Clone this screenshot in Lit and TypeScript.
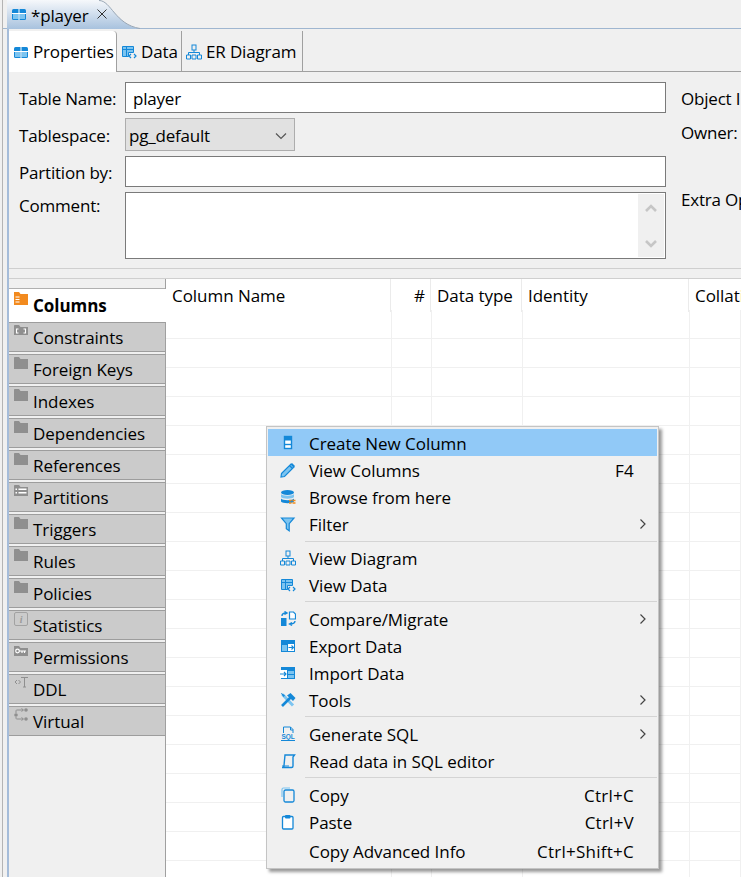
/**
 * Table editor with a context menu over the columns grid
 */

import { LitElement, css, html, svg } from "lit";
import { customElement } from "lit/decorators.js";

const BLUE = "#1488d8";
const LIGHT = "#7cc4f0";
const GREY = "#8f8f8f";

const icons: Record<string, ReturnType<typeof svg>> = {
  table: svg`<rect x="1" y="3" width="14" height="11" rx="1.5" fill="${BLUE}"/><rect x="2" y="8" width="5.5" height="5" fill="${LIGHT}"/><rect x="8.5" y="8" width="5.5" height="5" fill="${LIGHT}"/><path d="M1 7.5h14M8 3v11" stroke="#fff" stroke-width="1"/>`,
  data: svg`<path d="M1.5 2.5h11v6h-5v4h-6z" fill="${LIGHT}" stroke="${BLUE}"/><path d="M1.5 5.5h11M5.5 3v9" stroke="${BLUE}"/><path d="M10 10l-2 2 2 2M13 10l2 2-2 2" fill="none" stroke="${BLUE}" stroke-width="1.2"/>`,
  diagram: svg`<rect x="6" y="1" width="4" height="5" fill="none" stroke="${BLUE}"/><path d="M8 6v3M2.5 11V8.5h11V11" fill="none" stroke="${BLUE}"/><path d="M.5 11h4v4h-4zM6 11h4v4H6zM11.5 11h4v4h-4z" fill="none" stroke="${BLUE}"/>`,
  column: svg`<rect x="4.5" y="1.5" width="7" height="12" fill="#fff" stroke="${BLUE}" stroke-width="1.4"/><rect x="5" y="2" width="6" height="3.5" fill="${BLUE}"/><path d="M4.5 9.5h7" stroke="${BLUE}" stroke-width="1.4"/>`,
  pencil: svg`<path d="M1.5 11.5L11 2l3 3-9.5 9.5-3.5.5z" fill="${LIGHT}" stroke="${BLUE}" stroke-width="1.2"/><path d="M9.5 3.5l3 3" stroke="${BLUE}" stroke-width="1.4"/><path d="M11 2l3 3 1-1-3-3z" fill="${BLUE}"/>`,
  browse: svg`<ellipse cx="7.5" cy="3.5" rx="6.5" ry="2.5" fill="${BLUE}"/><path d="M1 5c1 2.2 12 2.2 13 0v3c-1 2.2-12 2.2-13 0z" fill="${LIGHT}"/><path d="M1 9.5c1 2.2 12 2.2 13 0v3c-1 2.2-12 2.2-13 0z" fill="${BLUE}"/><path d="M9 11.5h2.5M12.5 11.5h3M9 14h2.5M12.5 14h3" stroke="#f08a1c" stroke-width="1.4"/>`,
  filter: svg`<path d="M1.5 2h12.5l-4.8 5.6v7.2l-2.9-2V7.6z" fill="${LIGHT}" stroke="${BLUE}" stroke-width="1.2"/>`,
  compare: svg`<path d="M9.5 1h4l2 2v5h-6z" fill="#fff" stroke="${BLUE}" stroke-width="1.2"/><path d="M1 7h5.500v8H1z" fill="${BLUE}"/><path d="M2 5c0-2 1.500-3 4-3M4.500 .5L7 2 4.500 3.500" fill="none" stroke="${BLUE}" stroke-width="1.400"/><path d="M15 10c0 2-1.500 3-5.500 3M12 11.500L9.500 13l2.500 1.500" fill="none" stroke="${BLUE}" stroke-width="1.400"/>`,
  export: svg`<rect x="1" y="2" width="14" height="12" fill="${BLUE}"/><rect x="2" y="7" width="5" height="6" fill="${LIGHT}"/><rect x="8" y="6" width="6" height="7" fill="#fff"/><path d="M8.500 9.500h5M11.500 7.500l2 2-2 2" fill="none" stroke="${BLUE}" stroke-width="1.100"/>`,
  import: svg`<rect x="1" y="2" width="14" height="12" fill="${BLUE}"/><rect x="8" y="6" width="6" height="3" fill="${LIGHT}"/><rect x="8" y="10" width="6" height="3" fill="${LIGHT}"/><rect x="0" y="5" width="7" height="8" fill="#fff"/><path d="M0 9h6M4 7l2 2-2 2" fill="none" stroke="${BLUE}" stroke-width="1.100"/>`,
  tools: svg`<path d="M2.500 2.500l10.500 11" stroke="${LIGHT}" stroke-width="3"/><path d="M2 14L11 5" stroke="${BLUE}" stroke-width="2.600"/><path d="M7 3.500L10.500 1l5 5-2.500 3z" fill="${BLUE}"/><path d="M1.500 1L5 3.500 3.500 5 1 1.500z" fill="${BLUE}"/>`,
  sql: svg`<path d="M3.500 7V1h7l2.500 2.500V7" fill="none" stroke="${BLUE}"/><path d="M10.500 1v3H13" fill="none" stroke="${BLUE}"/><rect x="0" y="7" width="16" height="8" fill="#f0f0f0"/><text x="8" y="13" text-anchor="middle" font-size="6.500" font-weight="700" font-family="Liberation Sans, sans-serif" fill="${BLUE}">SQL</text><path d="M1 14.500h14" stroke="${BLUE}"/>`,
  read: svg`<path d="M5 2h9.500l-1.500 2v9c0 1-.500 1.500-1.500 1.500H2c1 0 2-.500 2-2z" fill="none" stroke="${BLUE}" stroke-width="1.400"/><path d="M2 13h7" stroke="${BLUE}"/>`,
  copy: svg`<path d="M2 10V2.500C2 1.500 2.500 1 3.500 1H10" fill="none" stroke="${LIGHT}" stroke-width="1.200"/><rect x="4" y="3" width="10" height="12" rx="1.500" fill="none" stroke="${BLUE}" stroke-width="1.300"/>`,
  paste: svg`<rect x="2.500" y="2.500" width="10.500" height="12.500" rx="1" fill="#fff" stroke="${BLUE}" stroke-width="1.300"/><rect x="5" y="1" width="5.500" height="3.500" rx="1" fill="${BLUE}"/>`,
  folder: svg`<path d="M0 2c0-.6.400-1 1-1h4l1.500 2H14v10H0z" fill="${GREY}"/>`,
  folderOrange: svg`<path d="M0 1h5l1.500 2H14v11H0z" fill="#f28a1e"/><path d="M1.500 6h4M1.500 8.500h4M1.500 11h4" stroke="#fff" stroke-width="1.200"/>`,
  constraints: svg`<path d="M0 2c0-.6.400-1 1-1h4l1.500 2H14v8H0z" fill="${GREY}"/><path d="M4.500 5h-2v4h2M9.500 5h2v4h-2" fill="none" stroke="#fff" stroke-width="1.100"/>`,
  partitions: svg`<path d="M0 2c0-.6.400-1 1-1h4l1.500 2H14v9H0z" fill="${GREY}"/><path d="M1.500 4.500h1.500v1.500H1.500zM1.500 8h1.500v1.500H1.500zM4.500 4.500h8v1.500h-8zM4.500 8h8v1.500h-8z" fill="#fff"/>`,
  info: svg`<rect x=".5" y=".5" width="13" height="13" rx="1.500" fill="none" stroke="#a2a2a2"/><text x="7" y="11" text-anchor="middle" font-size="10" font-style="italic" font-weight="700" font-family="Liberation Serif, serif" fill="#9a9a9a">i</text>`,
  key: svg`<path d="M0 2h5l1.500 2H14v8H0z" fill="${GREY}"/><circle cx="3.500" cy="7" r="1.800" fill="none" stroke="#fff" stroke-width="1.200"/><path d="M5 7h7M8 7v2M10.500 7v2" stroke="#fff" stroke-width="1.200"/>`,
  ddl: svg`<path d="M3 4L1 6l2 2M4.500 4l2 2-2 2" fill="none" stroke="${GREY}"/><path d="M7 1.500h7M10.500 1.500V11M9 11h3" fill="none" stroke="${GREY}"/>`,
  virtual: svg`<circle cx="12" cy="2" r="1.800" fill="${GREY}"/><circle cx="2" cy="7" r="1.800" fill="${GREY}"/><circle cx="12" cy="11" r="1.800" fill="${GREY}"/><path d="M2 5V3c0-1 .500-1 1-1h6M2 9v1c0 1 .500 1 1 1h6M7.500 .500L9.500 2l-2 1.500M7.500 9.500l2 1.500-2 1.500" fill="none" stroke="${GREY}"/>`,
};

const icon = (name: string, size = 16) =>
  html`<svg class="ico" width=${size} height=${size} viewBox="0 0 16 16">${icons[name]}</svg>`;

const sideTabs = [
  { label: "Constraints", icon: "constraints" },
  { label: "Foreign Keys", icon: "folder" },
  { label: "Indexes", icon: "folder" },
  { label: "Dependencies", icon: "folder" },
  { label: "References", icon: "folder" },
  { label: "Partitions", icon: "partitions" },
  { label: "Triggers", icon: "folder" },
  { label: "Rules", icon: "folder" },
  { label: "Policies", icon: "folder" },
  { label: "Statistics", icon: "info" },
  { label: "Permissions", icon: "key" },
  { label: "DDL", icon: "ddl" },
  { label: "Virtual", icon: "virtual" },
];

type MenuEntry = { label?: string; icon?: string; key?: string; sub?: boolean; cls?: string };

const menu: MenuEntry[] = [
  { label: "Create New Column", icon: "column", cls: "active" },
  { label: "View Columns", icon: "pencil", key: "F4" },
  { label: "Browse from here", icon: "browse" },
  { label: "Filter", icon: "filter", sub: true },
  { cls: "wide" },
  { label: "View Diagram", icon: "diagram" },
  { label: "View Data", icon: "data" },
  {},
  { label: "Compare/Migrate", icon: "compare", sub: true },
  { label: "Export Data", icon: "export" },
  { label: "Import Data", icon: "import" },
  { label: "Tools", icon: "tools", sub: true },
  {},
  { label: "Generate SQL", icon: "sql", sub: true },
  { label: "Read data in SQL editor", icon: "read" },
  {},
  { label: "Copy", icon: "copy", key: "Ctrl+C" },
  { label: "Paste", icon: "paste", key: "Ctrl+V" },
  { label: "Copy Advanced Info", key: "Ctrl+Shift+C", cls: "tall" },
];

@customElement("app-root")
export class AppRoot extends LitElement {
  static styles = css`
    :host {
      display: block;
      width: 741px;
      height: 877px;
      overflow: hidden;
      position: relative;
      background: #f0f0f0;
      color: #000;
      font-family: "Open Sans", "Noto Sans", sans-serif;
      font-size: 17px;
      letter-spacing: -0.05px;
    }

    .ico {
      display: block;
      flex: none;
    }

    .frame {
      margin-left: 2px;
      height: 877px;
      border-left: 1px solid #b4b4b4;
      display: flex;
      flex-direction: column;
      box-sizing: border-box;
    }

    .top-tabs {
      height: 29px;
      flex: none;
      padding-left: 4px;
      border-bottom: 1px solid #9fb6d0;
      box-sizing: border-box;
    }

    .editor-tab {
      position: relative;
      width: 133px;
      height: 28px;
      display: flex;
      align-items: center;
      gap: 4px;
      padding-left: 4px;
      box-sizing: border-box;
    }

    .editor-tab > svg.shape {
      position: absolute;
      left: 0;
      top: 0;
    }

    .editor-tab .ico,
    .editor-tab span,
    .editor-tab .close {
      position: relative;
    }

    .editor-tab span {
      margin-top: 2px;
      letter-spacing: -0.15px;
    }

    .close {
      margin-left: 5px;
      margin-top: -1px;
    }

    .editor {
      flex: 1;
      min-height: 0;
      margin-left: 4px;
      border-left: 2px solid #a5bcd9;
      display: flex;
      flex-direction: column;
    }

    .sub-tabs {
      height: 43px;
      flex: none;
      padding-top: 2px;
      display: flex;
      border-bottom: 1px solid #a0a0a0;
      box-sizing: border-box;
    }

    .sub-tab {
      display: flex;
      align-items: center;
      gap: 4px;
      padding: 0 3px 0 4px;
      border-right: 1px solid #a0a0a0;
      margin-bottom: -1px;
      height: 41px;
      box-sizing: border-box;
      white-space: nowrap;
      letter-spacing: -0.15px;
    }

    .sub-tab.on {
      width: 108px;
      background: #fff;
      border-radius: 0 4px 0 0;
    }

    .sub-tab.data {
      width: 65px;
    }

    .sub-tab.er {
      width: 121px;
    }

    .form {
      height: 197px;
      flex: none;
      padding: 10px 0 0 10px;
      box-sizing: border-box;
      display: grid;
      grid-template-columns: 106px 541px auto;
      grid-template-rows: 31px 33px 31px 67px;
      gap: 5px 0;
      border-bottom: 1px solid #cfcfcf;
      white-space: nowrap;
      letter-spacing: -0.2px;
    }

    .form label {
      display: flex;
      align-items: center;
      padding-top: 2px;
    }

    .form label.topped {
      align-items: flex-start;
      line-height: 26px;
      padding-top: 1px;
    }

    .form label.side {
      padding-left: 15px;
      width: 60px;
    }

    .form label.owner {
      padding-top: 0;
      margin-top: -4px;
    }

    .form label.extra {
      line-height: 16px;
      padding-top: 0;
    }

    .input {
      border: 1px solid #7a7a7a;
      background: #fff;
      display: flex;
      align-items: center;
      padding: 2px 0 0 7px;
      box-sizing: border-box;
    }

    .combo {
      width: 170px;
      height: 33px;
      border: 1px solid #adadad;
      background: #e1e1e1;
      display: flex;
      align-items: center;
      justify-content: space-between;
      padding: 2px 7px 0 3px;
      box-sizing: border-box;
    }

    .area {
      border: 1px solid #7a7a7a;
      background: #fff;
      display: flex;
      justify-content: flex-end;
      box-sizing: border-box;
      padding: 1px;
    }

    .scroll {
      width: 26px;
      background: #f0f0f0;
      display: flex;
      flex-direction: column;
      justify-content: space-between;
      align-items: center;
      padding: 9px 0 8px;
      box-sizing: border-box;
    }

    .gap {
      height: 10px;
      flex: none;
      border-bottom: 1px solid #cfcfcf;
      box-sizing: border-box;
    }

    .body {
      flex: 1;
      min-height: 0;
      display: flex;
      overflow: hidden;
    }

    .side-tabs {
      width: 157px;
      flex: none;
      border-right: 1px solid #a0a0a0;
      box-sizing: border-box;
      display: flex;
      flex-direction: column;
      gap: 2px;
    }

    .side-strip {
      height: 10px;
      margin-bottom: -2px;
      border-bottom: 1px solid #b0b0b0;
      box-sizing: border-box;
    }

    .side-tab {
      height: 30px;
      flex: none;
      background: #cbcbcb;
      border-top: 1px solid #9d9d9d;
      border-bottom: 1px solid #9d9d9d;
      box-sizing: border-box;
      display: flex;
      gap: 3px;
      padding-left: 5px;
    }

    .side-tab .ico {
      margin-top: 1px;
    }

    .side-tab span {
      line-height: 30px;
    }

    .side-tab.on {
      height: 33px;
      margin-bottom: -2px;
      background: #fff;
      border: none;
      margin-right: -1px;
      font-weight: 700;
    }

    .side-tab.on .ico {
      margin-top: 2px;
    }

    .side-tab.on span {
      line-height: 34px;
    }

    .grid {
      flex: 1;
      min-width: 0;
      background: #fff;
      overflow: hidden;
    }

    .row {
      display: grid;
      grid-template-columns: 226px 40px 91px 167px 1fr;
      height: 29px;
      border-bottom: 1px solid #f0f0f0;
      box-sizing: border-box;
    }

    .row > div {
      border-right: 1px solid #f0f0f0;
      box-sizing: border-box;
    }

    .row.head {
      grid-template-columns: 225px 40px 91px 167px 1fr;
      height: 31px;
      border-bottom: none;
      white-space: nowrap;
    }

    .row.head > div {
      padding-left: 6px;
      line-height: 33px;
      border-right-color: #ebebeb;
    }

    .row.head > div.num {
      text-align: right;
      padding-right: 5px;
    }

    .menu {
      position: absolute;
      left: 266px;
      top: 426px;
      width: 393px;
      height: 443px;
      box-sizing: border-box;
      border: 1px solid #c4c4c4;
      padding: 2px 1px;
      background: #f0f0f0;
      box-shadow: 3px 3px 3px rgba(0, 0, 0, 0.4);
    }

    .item {
      height: 27px;
      display: flex;
      align-items: center;
      white-space: nowrap;
    }

    .item.active {
      background: #91c9f7;
    }

    .item.tall {
      height: 29px;
      padding-top: 2px;
      box-sizing: border-box;
    }

    .gutter {
      width: 41px;
      flex: none;
      padding-left: 12px;
      box-sizing: border-box;
    }

    .item .label {
      flex: 1;
      margin-top: 2px;
    }

    .item .key {
      margin-top: 2px;
      margin-right: 23px;
      letter-spacing: 0.25px;
    }

    .arrow {
      margin-right: 10px;
    }

    .sep {
      height: 1px;
      background: #d4d4d4;
      margin: 3px 0 3px 37px;
    }

    .sep.wide {
      margin: 4px 0 2px 37px;
    }
  `;

  private _chevron(up: boolean) {
    return html`<svg width="12" height="10" viewBox="0 0 12 10">
      <path d=${up ? "M1 8l5-5 5 5" : "M1 2l5 5 5-5"} fill="none" stroke="#c6c6c6" stroke-width="2.6" />
    </svg>`;
  }

  private _menuEntry(e: MenuEntry) {
    if (!e.label) return html`<div class="sep ${e.cls ?? ""}"></div>`;
    return html`
      <div class="item ${e.cls ?? ""}">
        <div class="gutter">${e.icon ? icon(e.icon) : ""}</div>
        <span class="label">${e.label}</span>
        ${e.key ? html`<span class="key">${e.key}</span>` : ""}
        ${e.sub
          ? html`<svg class="arrow" width="8" height="12" viewBox="0 0 8 12">
              <path d="M1.500 1.500L6 6l-4.500 4.500" fill="none" stroke="#444" stroke-width="1.200" />
            </svg>`
          : ""}
      </div>
    `;
  }

  render() {
    return html`
      <div class="frame">
        <div class="top-tabs">
          <div class="editor-tab">
            <svg class="shape" width="133" height="29" viewBox="0 0 133 29">
              <defs>
                <linearGradient id="tabfill" x1="0" y1="0" x2="0" y2="1">
                  <stop offset="0" stop-color="#f6f8fb" />
                  <stop offset="1" stop-color="#a8c2de" />
                </linearGradient>
              </defs>
              <path d="M0 29V0H92c12 0 16 24 41 29z" fill="url(#tabfill)" />
              <path d="M92 .5c12 0 16 24 41 28" fill="none" stroke="#9aa7b5" />
            </svg>
            ${icon("table")}
            <span>*player</span>
            <svg class="close" width="10" height="10" viewBox="0 0 10 10">
              <path d="M.5 .5l9 9M9.500 .5l-9 9" stroke="#333" />
            </svg>
          </div>
        </div>
        <div class="editor">
          <div class="sub-tabs">
            <div class="sub-tab on">${icon("table")}<span>Properties</span></div>
            <div class="sub-tab data">${icon("data")}<span>Data</span></div>
            <div class="sub-tab er">${icon("diagram")}<span>ER Diagram</span></div>
          </div>
          <div class="form">
            <label>Table Name:</label>
            <div class="input">player</div>
            <label class="side">Object ID:</label>
            <label>Tablespace:</label>
            <div>
              <div class="combo">
                <span>pg_default</span>
                <svg width="12" height="8" viewBox="0 0 12 8">
                  <path d="M1 1.500l5 5 5-5" fill="none" stroke="#555" stroke-width="1.200" />
                </svg>
              </div>
            </div>
            <label class="side owner">Owner:</label>
            <label>Partition by:</label>
            <div class="input"></div>
            <div></div>
            <label class="topped">Comment:</label>
            <div class="area">
              <div class="scroll">${this._chevron(true)}${this._chevron(false)}</div>
            </div>
            <label class="side topped extra">Extra Options:</label>
          </div>
          <div class="gap"></div>
          <div class="body">
            <div class="side-tabs">
              <div class="side-strip"></div>
              <div class="side-tab on">${icon("folderOrange")}<span>Columns</span></div>
              ${sideTabs.map(
                (t) => html`<div class="side-tab">${icon(t.icon)}<span>${t.label}</span></div>`
              )}
            </div>
            <div class="grid">
              <div class="row head">
                <div>Column Name</div>
                <div class="num">#</div>
                <div>Data type</div>
                <div>Identity</div>
                <div>Collation</div>
              </div>
              ${Array.from({ length: 20 }).map(
                () => html`<div class="row">
                  <div></div><div></div><div></div><div></div><div></div>
                </div>`
              )}
            </div>
          </div>
        </div>
      </div>
      <div class="menu">${menu.map((e) => this._menuEntry(e))}</div>
    `;
  }
}

declare global {
  interface HTMLElementTagNameMap {
    "app-root": AppRoot;
  }
}
